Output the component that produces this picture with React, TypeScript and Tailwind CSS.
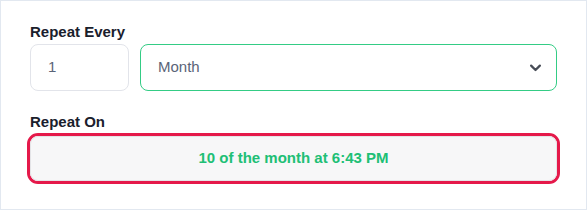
import React from 'react';

export default function App() {
  return (
    <div className="w-[587px] h-[210px] border border-[#e2e8f0] bg-white px-[29px] pt-[21px] font-['Liberation_Sans',Arial,sans-serif]">
      <div className="text-[15px] font-bold leading-[20px] text-[#1a202c]">Repeat Every</div>
      <div className="mt-[2px] flex gap-[11px]">
        <div className="flex h-[47px] w-[99px] items-center rounded-[8px] border border-[#e2e4ea] pl-[17px] text-[15px] text-[#5a6478]">
          1
        </div>
        <div className="flex h-[47px] flex-1 items-center justify-between rounded-[8px] border border-[#34cc85] pl-[17px] pr-[13px] text-[15px] text-[#5a6478]">
          <span>Month</span>
          <svg width="15" height="15" viewBox="0 0 24 24" fill="none" stroke="#474c56" strokeWidth="3.6" strokeLinecap="round" strokeLinejoin="round">
            <path d="M5 9l7 7 7-7" />
          </svg>
        </div>
      </div>
      <div className="mt-[21px] text-[15px] font-bold leading-[20px] text-[#1a202c]">Repeat On</div>
      <div className="mt-[1px] -mx-[3px] rounded-[11px] border-[3px] border-[#e5194a]">
        <div className="flex h-[45px] items-center justify-center rounded-[8px] border border-[#e4e4e7] bg-[#f7f7f8] text-[15px] font-bold text-[#20bf75]">
          10 of the month at 6:43 PM
        </div>
      </div>
    </div>
  );
}
